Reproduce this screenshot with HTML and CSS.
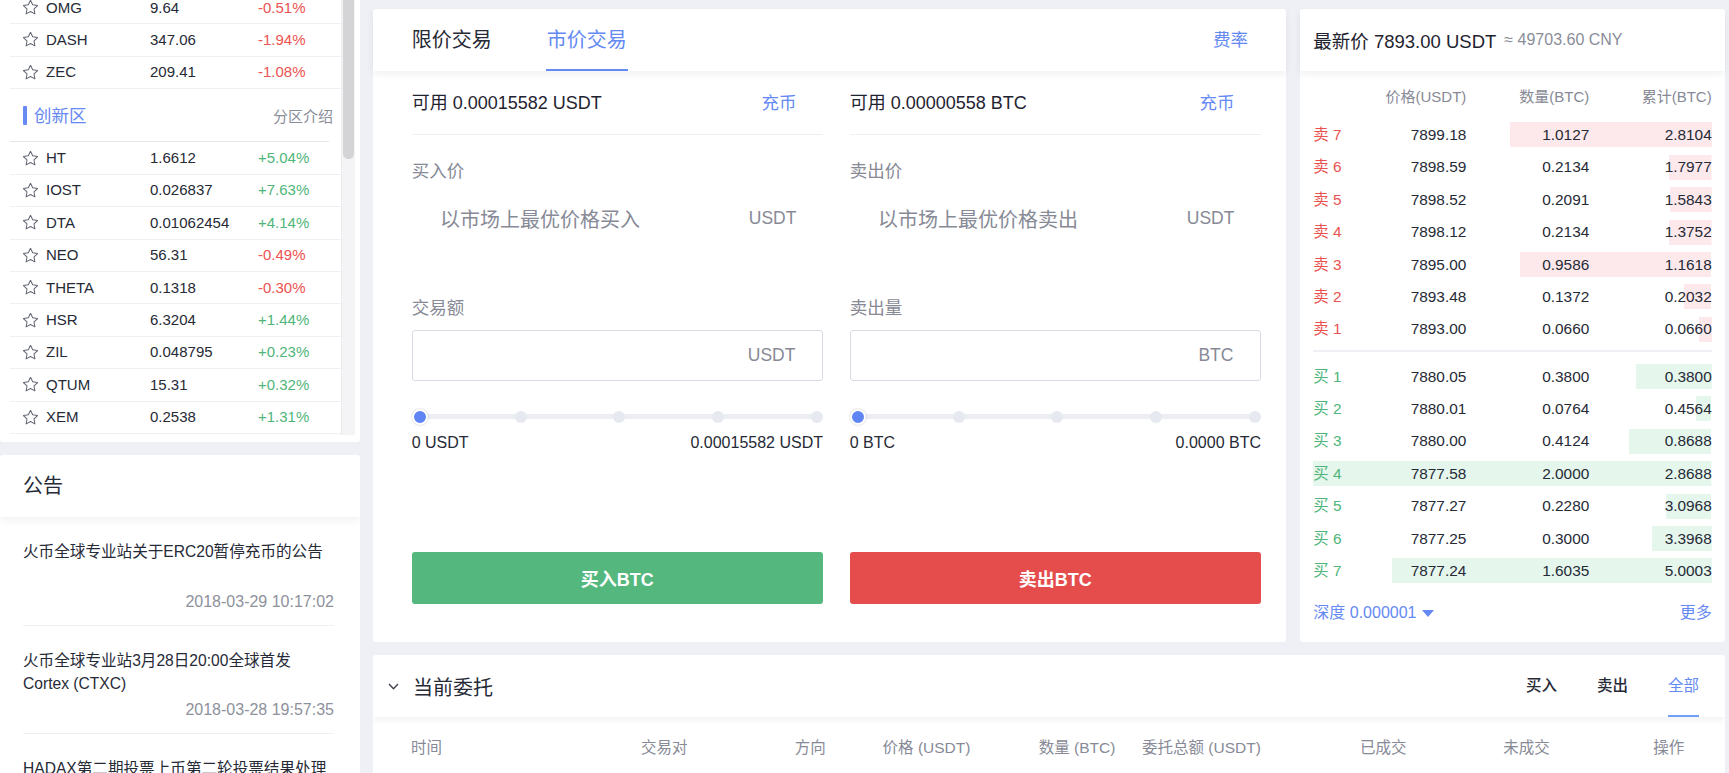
FILE: index.html
```html
<!DOCTYPE html>
<html lang="zh-CN">
<head>
<meta charset="utf-8">
<title>火币全球专业站 - 交易</title>
<link rel="stylesheet" href="styles.css">
</head>
<body>
<div class="page">
  <aside class="side">
    <section class="card market">
      <div class="market-list">
        <div class="mrow"><svg class="star" viewBox="2.4 2.4 19.2 19.2"><path d="M12 2.8l2.8 5.8 6.3.9-4.6 4.4 1.1 6.3L12 17.2l-5.6 3 1.1-6.3L2.9 9.5l6.3-.9z"/></svg><span>OMG</span><span>9.64</span><span class="down">-0.51%</span></div>
        <div class="mrow"><svg class="star" viewBox="2.4 2.4 19.2 19.2"><path d="M12 2.8l2.8 5.8 6.3.9-4.6 4.4 1.1 6.3L12 17.2l-5.6 3 1.1-6.3L2.9 9.5l6.3-.9z"/></svg><span>DASH</span><span>347.06</span><span class="down">-1.94%</span></div>
        <div class="mrow"><svg class="star" viewBox="2.4 2.4 19.2 19.2"><path d="M12 2.8l2.8 5.8 6.3.9-4.6 4.4 1.1 6.3L12 17.2l-5.6 3 1.1-6.3L2.9 9.5l6.3-.9z"/></svg><span>ZEC</span><span>209.41</span><span class="down">-1.08%</span></div>
        <div class="zone"><span class="zone-title">创新区</span><span class="zone-link">分区介绍</span></div>
        <div class="mrow"><svg class="star" viewBox="2.4 2.4 19.2 19.2"><path d="M12 2.8l2.8 5.8 6.3.9-4.6 4.4 1.1 6.3L12 17.2l-5.6 3 1.1-6.3L2.9 9.5l6.3-.9z"/></svg><span>HT</span><span>1.6612</span><span class="up">+5.04%</span></div>
        <div class="mrow"><svg class="star" viewBox="2.4 2.4 19.2 19.2"><path d="M12 2.8l2.8 5.8 6.3.9-4.6 4.4 1.1 6.3L12 17.2l-5.6 3 1.1-6.3L2.9 9.5l6.3-.9z"/></svg><span>IOST</span><span>0.026837</span><span class="up">+7.63%</span></div>
        <div class="mrow"><svg class="star" viewBox="2.4 2.4 19.2 19.2"><path d="M12 2.8l2.8 5.8 6.3.9-4.6 4.4 1.1 6.3L12 17.2l-5.6 3 1.1-6.3L2.9 9.5l6.3-.9z"/></svg><span>DTA</span><span>0.01062454</span><span class="up">+4.14%</span></div>
        <div class="mrow"><svg class="star" viewBox="2.4 2.4 19.2 19.2"><path d="M12 2.8l2.8 5.8 6.3.9-4.6 4.4 1.1 6.3L12 17.2l-5.6 3 1.1-6.3L2.9 9.5l6.3-.9z"/></svg><span>NEO</span><span>56.31</span><span class="down">-0.49%</span></div>
        <div class="mrow"><svg class="star" viewBox="2.4 2.4 19.2 19.2"><path d="M12 2.8l2.8 5.8 6.3.9-4.6 4.4 1.1 6.3L12 17.2l-5.6 3 1.1-6.3L2.9 9.5l6.3-.9z"/></svg><span>THETA</span><span>0.1318</span><span class="down">-0.30%</span></div>
        <div class="mrow"><svg class="star" viewBox="2.4 2.4 19.2 19.2"><path d="M12 2.8l2.8 5.8 6.3.9-4.6 4.4 1.1 6.3L12 17.2l-5.6 3 1.1-6.3L2.9 9.5l6.3-.9z"/></svg><span>HSR</span><span>6.3204</span><span class="up">+1.44%</span></div>
        <div class="mrow"><svg class="star" viewBox="2.4 2.4 19.2 19.2"><path d="M12 2.8l2.8 5.8 6.3.9-4.6 4.4 1.1 6.3L12 17.2l-5.6 3 1.1-6.3L2.9 9.5l6.3-.9z"/></svg><span>ZIL</span><span>0.048795</span><span class="up">+0.23%</span></div>
        <div class="mrow"><svg class="star" viewBox="2.4 2.4 19.2 19.2"><path d="M12 2.8l2.8 5.8 6.3.9-4.6 4.4 1.1 6.3L12 17.2l-5.6 3 1.1-6.3L2.9 9.5l6.3-.9z"/></svg><span>QTUM</span><span>15.31</span><span class="up">+0.32%</span></div>
        <div class="mrow"><svg class="star" viewBox="2.4 2.4 19.2 19.2"><path d="M12 2.8l2.8 5.8 6.3.9-4.6 4.4 1.1 6.3L12 17.2l-5.6 3 1.1-6.3L2.9 9.5l6.3-.9z"/></svg><span>XEM</span><span>0.2538</span><span class="up">+1.31%</span></div>
      </div>
      <div class="scroll"><div class="thumb"></div></div>
    </section>
    <section class="card notice">
      <header class="notice-head">公告</header>
      <ul class="notice-list">
        <li><p class="n-title">火币全球专业站关于ERC20暂停充币的公告</p><p class="n-date">2018-03-29 10:17:02</p></li>
        <li><p class="n-title">火币全球专业站3月28日20:00全球首发<span class="nw">Cortex (CTXC)</span></p><p class="n-date">2018-03-28 19:57:35</p></li>
        <li><p class="n-title">HADAX第二期投票上币第二轮投票结果处理</p><p class="n-date">2018-03-28 18:30:00</p></li>
      </ul>
    </section>
  </aside>

  <main class="main">
    <div class="top">
      <section class="card trade">
        <header class="trade-head">
          <div class="tabs"><span class="tab">限价交易</span><span class="tab active">市价交易</span></div>
          <span class="fee">费率</span>
        </header>
        <div class="trade-body">
          <div class="col">
            <div class="bal"><span class="bal-text">可用 <b>0.00015582</b> USDT</span><span class="link">充币</span></div>
            <div class="label">买入价</div>
            <div class="field"><span class="ph">以市场上最优价格买入</span><span class="unit">USDT</span></div>
            <div class="label second">交易额</div>
            <div class="field box"><span></span><span class="unit">USDT</span></div>
            <div class="slider"><i class="dot on"></i><i class="dot"></i><i class="dot"></i><i class="dot"></i><i class="dot"></i></div>
            <div class="range"><span>0 USDT</span><span>0.00015582 USDT</span></div>
            <button class="btn buy">买入BTC</button>
          </div>
          <div class="col">
            <div class="bal"><span class="bal-text">可用 <b>0.00000558</b> BTC</span><span class="link">充币</span></div>
            <div class="label">卖出价</div>
            <div class="field"><span class="ph">以市场上最优价格卖出</span><span class="unit">USDT</span></div>
            <div class="label second">卖出量</div>
            <div class="field box"><span></span><span class="unit">BTC</span></div>
            <div class="slider"><i class="dot on"></i><i class="dot"></i><i class="dot"></i><i class="dot"></i><i class="dot"></i></div>
            <div class="range"><span>0 BTC</span><span>0.0000 BTC</span></div>
            <button class="btn sell">卖出BTC</button>
          </div>
        </div>
      </section>

      <section class="card book">
        <header class="book-head"><span class="last">最新价 7893.00 USDT</span><span class="cny">≈ 49703.60 CNY</span></header>
        <div class="book-body">
          <div class="brow bcols"><span></span><span>价格(USDT)</span><span>数量(BTC)</span><span>累计(BTC)</span></div>
          <div class="asks">
            <div class="brow ask" style="--w:50.64%"><span class="side-l">卖 7</span><span>7899.18</span><span>1.0127</span><span>2.8104</span></div>
            <div class="brow ask" style="--w:10.67%"><span class="side-l">卖 6</span><span>7898.59</span><span>0.2134</span><span>1.7977</span></div>
            <div class="brow ask" style="--w:10.46%"><span class="side-l">卖 5</span><span>7898.52</span><span>0.2091</span><span>1.5843</span></div>
            <div class="brow ask" style="--w:10.67%"><span class="side-l">卖 4</span><span>7898.12</span><span>0.2134</span><span>1.3752</span></div>
            <div class="brow ask" style="--w:47.93%"><span class="side-l">卖 3</span><span>7895.00</span><span>0.9586</span><span>1.1618</span></div>
            <div class="brow ask" style="--w:6.86%"><span class="side-l">卖 2</span><span>7893.48</span><span>0.1372</span><span>0.2032</span></div>
            <div class="brow ask" style="--w:3.3%"><span class="side-l">卖 1</span><span>7893.00</span><span>0.0660</span><span>0.0660</span></div>
          </div>
          <div class="bsep"></div>
          <div class="bids">
            <div class="brow bid" style="--w:19%"><span class="side-l">买 1</span><span>7880.05</span><span>0.3800</span><span>0.3800</span></div>
            <div class="brow bid" style="--w:3.82%"><span class="side-l">买 2</span><span>7880.01</span><span>0.0764</span><span>0.4564</span></div>
            <div class="brow bid" style="--w:20.62%"><span class="side-l">买 3</span><span>7880.00</span><span>0.4124</span><span>0.8688</span></div>
            <div class="brow bid" style="--w:100%"><span class="side-l">买 4</span><span>7877.58</span><span>2.0000</span><span>2.8688</span></div>
            <div class="brow bid" style="--w:11.4%"><span class="side-l">买 5</span><span>7877.27</span><span>0.2280</span><span>3.0968</span></div>
            <div class="brow bid" style="--w:15%"><span class="side-l">买 6</span><span>7877.25</span><span>0.3000</span><span>3.3968</span></div>
            <div class="brow bid" style="--w:80.18%"><span class="side-l">买 7</span><span>7877.24</span><span>1.6035</span><span>5.0003</span></div>
          </div>
          <div class="book-foot"><span class="depth">深度 0.000001 <svg class="caret" viewBox="0 0 12 7"><path d="M0 0h12L6 7z"/></svg></span><span>更多</span></div>
        </div>
      </section>
    </div>

    <section class="card orders">
      <header class="orders-head">
        <div class="o-title"><svg class="chev" viewBox="0 0 11 7"><path d="M1 1l4.5 4.8L10 1"/></svg><span>当前委托</span></div>
        <div class="o-tabs"><span class="o-tab">买入</span><span class="o-tab">卖出</span><span class="o-tab active">全部</span></div>
      </header>
      <div class="o-cols"><span>时间</span><span>交易对</span><span>方向</span><span>价格 (USDT)</span><span>数量 (BTC)</span><span>委托总额 (USDT)</span><span>已成交</span><span>未成交</span><span>操作</span></div>
    </section>
  </main>
</div>
</body>
</html>
```

FILE: styles.css
```css
* { box-sizing: border-box; margin: 0; padding: 0; }
html, body { height: 100%; }
body {
  background: #eef0f5;
  font-family: "Liberation Sans", "Noto Sans CJK SC", Arial, sans-serif;
  color: #262a36;
  overflow: hidden;
}
.page { display: flex; height: 773px; }

.card { background: #fff; border-radius: 3px; }

/* ---------- left column ---------- */
.side { width: 360px; flex: none; display: flex; flex-direction: column; gap: 13px; }
.market { height: 442px; flex: none; display: flex; overflow: hidden; border-radius: 0 0 3px 3px; }
.market-list { width: 331px; flex: none; margin-left: 10px; margin-top: -8.2px; }
.mrow {
  display: grid;
  grid-template-columns: 23px 104px 108px 1fr;
  align-items: center;
  height: 32.4px;
  padding-left: 13px;
  border-bottom: 1px solid #eff0f3;
  font-size: 15px;
  line-height: 16px;
  color: #262a36;
}
.star { width: 15px; height: 15px; fill: none; stroke: #626572; stroke-width: 1.3; stroke-linejoin: round; }
.down { color: #ec5252; }
.up { color: #4fb57a; }
.zone {
  height: 53.4px;
  display: flex;
  align-items: center;
  justify-content: space-between;
  padding: 0 8px 0 13px;
  background: linear-gradient(#e4e5ea, #e4e5ea) no-repeat left bottom / 319px 1px;
}
.zone-title {
  display: flex; align-items: center; gap: 7px;
  font-size: 17.5px; line-height: 24px; color: #6689f3;
}
.zone-title::before { content: ""; width: 4px; height: 19px; background: #6689f3; border-radius: 1px; }
.zone-link { font-size: 15px; color: #8a8d99; }
.scroll { width: 14px; height: 435px; flex: none; background: #f4f4f6; border-left: 1px solid #ececef; }
.thumb { width: 11px; height: 159px; margin-left: 1px; background: #d4d4d7; border-radius: 0 0 6px 6px; }

.notice { flex: 1; overflow: hidden; border-radius: 3px 3px 0 0; }
.notice-head {
  position: relative;
  height: 62px;
  padding-left: 23px;
  font-size: 20px;
  line-height: 62px;
  box-shadow: 0 3px 8px rgba(40, 50, 90, 0.07);
}
.notice-list { list-style: none; padding: 0 26px 0 23px; }
.notice-list li { padding: 23px 0 12px; border-bottom: 1px solid #eef0f3; }
.n-title { font-size: 15.6px; line-height: 23px; min-height: 46px; margin-right: -12px; color: #262a36; }
.nw { white-space: nowrap; }
.n-date { font-size: 16px; line-height: 22px; margin-top: 4.5px; text-align: right; color: #8e919c; }

/* ---------- main ---------- */
.main {
  flex: 1; min-width: 0;
  margin: 0 4px 0 13px;
  padding-top: 9px;
  display: flex; flex-direction: column; gap: 13.3px;
}
.top { display: flex; gap: 14px; height: 632.7px; flex: none; }

.trade { width: 913px; flex: none; display: flex; flex-direction: column; }
.trade-head {
  position: relative; z-index: 1;
  height: 62px;
  display: flex; align-items: stretch; justify-content: space-between;
  padding: 0 38px 0 38.7px;
  border-radius: 3px 3px 0 0;
  box-shadow: 0 3px 7px rgba(40, 50, 90, 0.07);
}
.tabs { display: flex; gap: 55px; }
.tab { font-size: 20px; line-height: 62px; color: #262a36; }
.tab.active { color: #6489f3; box-shadow: inset 0 -2px 0 #6489f3; padding: 0 1px; margin-left: -1px; }
.fee { font-size: 17.5px; line-height: 62px; color: #6489f3; }

.trade-body { display: flex; gap: 26.7px; padding: 0 25px 0 38.7px; }
.col { flex: 1; min-width: 0; display: flex; flex-direction: column; }
.bal {
  height: 64px;
  display: flex; align-items: center; justify-content: space-between;
  padding-right: 26.6px;
  border-bottom: 1px solid #eef0f4;
  font-size: 18px; line-height: 24px; color: #1f2330;
}
.bal-text b { font-weight: normal; }
.link { color: #6489f3; font-size: 17.5px; }
.label { margin-top: 23.7px; font-size: 17.5px; line-height: 24px; color: #878a96; }
.label.second { margin-top: 52.6px; }
.field {
  height: 51px; margin-top: 10px;
  display: flex; align-items: center; justify-content: space-between;
  padding: 0 26.6px 0 28.3px;
}
.field.box { border: 1px solid #d9dae4; border-radius: 3px; }
.ph { font-size: 20px; color: #878a96; }
.unit { font-size: 17.5px; color: #878a96; }

.slider {
  position: relative;
  height: 16px; margin-top: 27.4px;
  display: flex; align-items: center; justify-content: space-between;
}
.slider::before {
  content: ""; position: absolute; left: 0; right: 0; top: 5.5px;
  height: 5px; border-radius: 3px; background: #eceef4;
}
.dot { position: relative; width: 12px; height: 12px; border-radius: 50%; background: #e7e9f1; }
.dot.on { width: 16px; height: 16px; background: #5f84f4; border: 2px solid #fff; box-shadow: 0 0 2px rgba(0, 0, 0, 0.25); }
.range {
  margin-top: 8.6px;
  display: flex; justify-content: space-between;
  font-size: 16px; line-height: 20px; color: #262a36;
}
.btn {
  margin-top: 99.2px; height: 52px;
  border: 0; border-radius: 3px;
  color: #fff; font-family: inherit; font-size: 18px; font-weight: bold;
}
.btn.buy { background: #54b87e; }
.btn.sell { background: #e54c4c; }

/* ---------- order book ---------- */
.book { flex: 1; min-width: 0; }
.book-head {
  position: relative; z-index: 1;
  height: 62px;
  display: flex; align-items: center; gap: 8px;
  padding-left: 13.3px;
  border-radius: 3px 3px 0 0;
  box-shadow: 0 3px 7px rgba(40, 50, 90, 0.07);
}
.last { font-size: 18.5px; color: #1f2330; }
.cny { font-size: 16px; color: #8a8d99; }
.book-body { padding: 0 13.3px; }
.brow {
  display: grid;
  grid-template-columns: 70px 83px 123px 1fr;
  height: 32.4px;
  align-items: center;
  font-size: 15.4px; line-height: 20px;
  background-repeat: no-repeat;
  background-position: right center;
  background-size: var(--w, 0%) 25px;
}
.brow span:not(:first-child) { text-align: right; }
.bcols { height: 20px; margin-top: 15.7px; font-size: 15px; color: #878a96; }
.asks { margin-top: 12.1px; }
.ask { background-image: linear-gradient(#fde9eb, #fde9eb); }
.bid { background-image: linear-gradient(#e5f6ed, #e5f6ed); }
.ask .side-l { color: #e9524f; }
.bid .side-l { color: #4fb57a; }
.bsep { height: 2px; margin: 4.5px 0 8.4px; background: #eef0f4; }
.book-foot {
  margin-top: 16px;
  display: flex; justify-content: space-between; align-items: center;
  font-size: 16px; line-height: 20px; color: #6489f3;
}
.depth { display: flex; align-items: center; gap: 6px; }
.caret { width: 12px; height: 7px; fill: #6489f3; }

/* ---------- orders ---------- */
.orders { flex: 1; min-height: 0; overflow: hidden; border-radius: 3px 3px 0 0; }
.orders-head {
  position: relative;
  height: 62.3px;
  display: flex; align-items: stretch; justify-content: space-between;
  padding: 0 26px 0 15px;
  box-shadow: 0 3px 7px rgba(40, 50, 90, 0.07);
}
.o-title { display: flex; align-items: center; gap: 14px; font-size: 20px; }
.chev { width: 11px; height: 7px; fill: none; stroke: #3b3e4a; stroke-width: 1.3; }
.o-tabs { display: flex; gap: 40px; }
.o-tab { font-size: 15.5px; line-height: 62px; font-weight: 500; color: #262a36; }
.o-tab.active { color: #6489f3; font-weight: normal; box-shadow: inset 0 -2px 0 #6fa0f5; }
.o-cols {
  display: grid;
  grid-template-columns: 230px 153.8px 87.8px 156.2px 103.2px 218px 143.3px 150px auto;
  padding-left: 38px;
  margin-top: 20.7px;
  font-size: 15.5px; line-height: 20px; color: #878a96;
}
```
